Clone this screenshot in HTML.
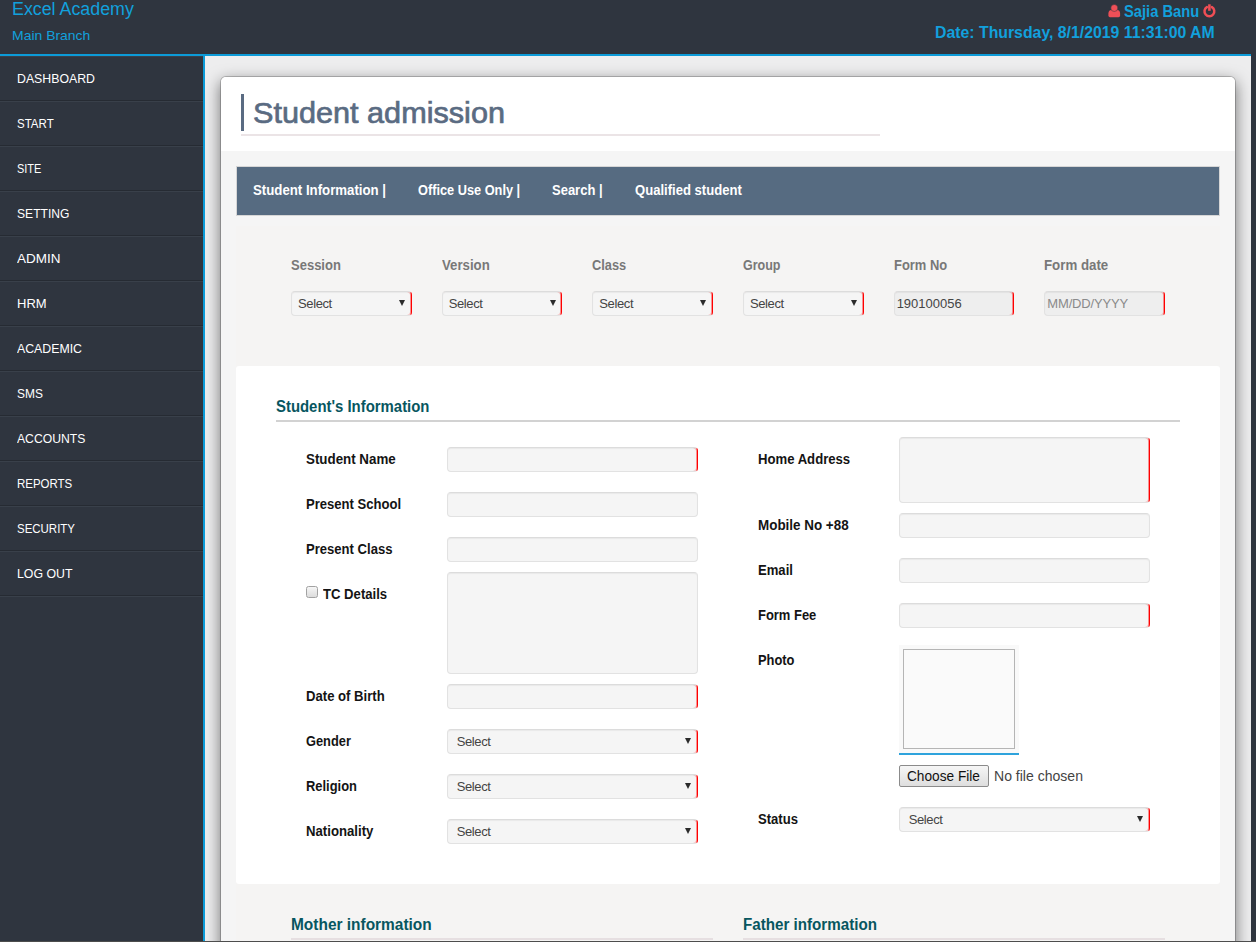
<!DOCTYPE html>
<html lang="en">
<head>
<meta charset="utf-8">
<title>Student admission</title>
<style>
*{box-sizing:border-box;margin:0;padding:0}
html,body{width:1256px;height:942px;overflow:hidden;background:#2f353f;font-family:"Liberation Sans",sans-serif;}
body{position:relative}
.abs{position:absolute}
a{color:inherit;text-decoration:none}
.fx{display:inline-block;transform-origin:0 50%;white-space:nowrap}
header{position:absolute;left:0;top:0;width:1251px;height:56px;background:#2f353f;border-bottom:2px solid #0c9bd8;z-index:5}
header .brand{position:absolute;left:11.5px;top:-3px;font-size:18px;line-height:24px;color:#12a0dc;white-space:nowrap}
header .branch{position:absolute;left:11.5px;top:26.4px;font-size:13.6px;line-height:20px;color:#12a0dc;white-space:nowrap}
header .user{position:absolute;left:1108px;top:0px;height:21px;font-size:16px;line-height:21px;font-weight:bold;color:#12a0dc;white-space:nowrap}
header .user span{position:absolute;left:16px;top:1px}
header .date{position:absolute;left:935px;top:22px;font-size:16px;line-height:21px;font-weight:bold;color:#12a0dc;white-space:nowrap}
nav.side{position:absolute;left:0;top:56px;width:203px;bottom:0;background:#2f353f}
nav.side ul{list-style:none;border-bottom:1px solid #39404a}
nav.side li{height:45px;border-bottom:1px solid #262b33;border-top:1px solid #39404a;padding-left:17px;font-size:13px;line-height:43px;color:#fff;text-transform:uppercase;white-space:nowrap}
main{position:absolute;left:203px;top:56px;width:1048px;height:886px;background:#ededee;border-left:2px solid #0c9bd8;overflow:hidden}
.card{position:absolute;left:15px;top:20px;width:1016px;height:900px;background:#f5f5f5;background-clip:padding-box;border:1px solid rgba(0,0,0,.2);border-radius:6px 6px 0 0;box-shadow:0 5px 15px rgba(0,0,0,.5);overflow:hidden}
.card-head{position:absolute;left:0;top:0;width:100%;height:74px;background:#fff}
.card-head h1{position:absolute;left:20px;top:17px;height:37px;border-left:3px solid #5a6b82;padding-left:9.4px;font-size:30px;line-height:37px;font-weight:normal;color:#5a6b82;white-space:nowrap;-webkit-text-stroke:.7px #5a6b82}
.card-head .rule{position:absolute;left:20px;top:57px;width:639px;height:2px;background:#ebe4e6}
.tabs{position:absolute;left:15px;top:89px;width:984px;height:50px;background:#566b81;border:1px solid #d6d6d6;list-style:none}
.tabs li{position:absolute;top:.6px;line-height:45px;font-size:14px;font-weight:bold;color:#fff;white-space:nowrap}
.filters{position:absolute;left:55px;top:167px;width:904px;display:flex}
.filters .col{flex:0 0 16.6667%;padding:0 15px;position:relative;height:90px}
.filters label{display:block;margin-top:12px;font-size:14px;line-height:18px;font-weight:bold;color:#787878;white-space:nowrap}
.filters .ctl{margin-top:17px;width:100%}
.ctl{position:relative;display:block;height:25px;background:#f5f5f5;border:1px solid #e2e2e2;border-top-color:#dcdcdc;border-radius:4px;box-shadow:inset 0 1px 1px rgba(0,0,0,.05);font-family:"Liberation Sans",sans-serif;font-size:13px;color:#444;padding:0 7px;line-height:23px;white-space:nowrap}
.panel .ctl,.panel .selw{position:absolute}
input.ctl,textarea.ctl,select.ctl,input.cb,button.fb{-webkit-appearance:none;appearance:none;outline:none;resize:none;margin:0}
textarea.ctl{overflow:hidden}
.selw{display:block;height:25px}
.selw select.ctl{position:static;display:block;width:100%;letter-spacing:-.38px}
.filters .selw{position:relative;margin-top:17px}
.filters .selw .ctl{margin-top:0}
input.ctl::placeholder{color:#8a8a8a;opacity:1}
.ctl.req{border-right:1px solid #f00;box-shadow:inset 0 1px 1px rgba(0,0,0,.05),inset -1px 0 0 rgba(255,0,0,.4)}
.ctl.ro{background:#eeeeee}
.selw .arr{position:absolute;right:6.5px;top:9px;width:0;height:0;border-left:3.5px solid transparent;border-right:3.5px solid transparent;border-top:6px solid #2b2b2b}
.panel{position:absolute;left:15px;top:289px;width:984px;height:518px;background:#fff;border-radius:3px}
.panel h2{position:absolute;left:40px;top:31px;font-size:16px;line-height:20px;font-weight:bold;color:#07565f;white-space:nowrap}
.panel .hr{position:absolute;left:40px;top:54px;width:904px;height:2px;background:#d2d2d2}
.panel .lab{position:absolute;font-size:14px;line-height:18px;font-weight:bold;color:#141414;white-space:nowrap}
.L{left:70px}.R{left:522px}
.LI{left:210.67px;width:251.33px}.RI{left:662.67px;width:251.33px}
.sec{position:absolute;top:838px;font-size:16px;line-height:20px;font-weight:bold;color:#07565f;white-space:nowrap}
.sechr{position:absolute;top:861px;height:2px;background:#e6dfe1}
</style>
</head>
<body>
<header>
  <div class="brand"><span id="brand" class="fx" style="transform:scaleX(0.9901)">Excel Academy</span></div>
  <div class="branch"><span id="branch" class="fx" style="transform:scaleX(1.0267)">Main Branch</span></div>
  <div class="user">
    <svg class="abs" style="left:0;top:4px" width="13" height="14" viewBox="0 0 13 14"><path d="M2 13.2 Q0.4 13.2 0.4 11.6 V9.6 Q0.4 6.3 3.4 6 H9.2 Q12.1 6.3 12.1 9.6 V11.6 Q12.1 13.2 10.5 13.2 Z" fill="#ee4f57"/><circle cx="6.3" cy="4" r="3.5" fill="#ee4f57" stroke="#2f353f" stroke-width=".5"/></svg>
    <span id="uname" class="fx" style="transform:scaleX(0.9189)">Sajia Banu</span>
    <svg class="abs" style="left:93.5px;top:4px" width="15" height="15" viewBox="0 0 15 15"><path d="M4.9 3.1 A4.9 4.9 0 1 0 9.9 3.1" fill="none" stroke="#f04e55" stroke-width="2.5" stroke-linecap="round"/><path d="M7.4 0.3 V6.8" stroke="#f04e55" stroke-width="2.6" stroke-linecap="butt"/></svg>
  </div>
  <div class="date"><span id="date" class="fx" style="transform:scaleX(0.9890)">Date: Thursday, 8/1/2019 11:31:00 AM</span></div>
</header>

<nav class="side"><ul><li><a href="#" id="s0" class="fx" style="transform:scaleX(0.9464)">DASHBOARD</a></li><li><a href="#" id="s1" class="fx" style="transform:scaleX(0.8859)">START</a></li><li><a href="#" id="s2" class="fx" style="transform:scaleX(0.8416)">SITE</a></li><li><a href="#" id="s3" class="fx" style="transform:scaleX(0.9305)">SETTING</a></li><li><a href="#" id="s4" class="fx" style="transform:scaleX(1.0367)">ADMIN</a></li><li><a href="#" id="s5" class="fx" style="transform:scaleX(1.0000)">HRM</a></li><li><a href="#" id="s6" class="fx" style="transform:scaleX(0.9471)">ACADEMIC</a></li><li><a href="#" id="s7" class="fx" style="transform:scaleX(0.9179)">SMS</a></li><li><a href="#" id="s8" class="fx" style="transform:scaleX(0.9357)">ACCOUNTS</a></li><li><a href="#" id="s9" class="fx" style="transform:scaleX(0.8826)">REPORTS</a></li><li><a href="#" id="s10" class="fx" style="transform:scaleX(0.8818)">SECURITY</a></li><li><a href="#" id="s11" class="fx" style="transform:scaleX(0.9492)">LOG OUT</a></li></ul></nav>

<main>
  <section class="card">
    <div class="card-head">
      <h1><span id="title" class="fx" style="transform:scaleX(1.0209)">Student admission</span></h1>
      <div class="rule"></div>
    </div>
    <ul class="tabs">
      <li style="left:16px"><a href="#" id="t0" class="fx" style="transform:scaleX(0.9450)">Student Information |</a></li>
      <li style="left:180.6px"><a href="#" id="t1" class="fx" style="transform:scaleX(0.9116)">Office Use Only |</a></li>
      <li style="left:315px"><a href="#" id="t2" class="fx" style="transform:scaleX(0.9280)">Search |</a></li>
      <li style="left:397.5px"><a href="#" id="t3" class="fx" style="transform:scaleX(0.9340)">Qualified student</a></li>
    </ul>
    <div class="abs" style="left:15px;top:149px;width:984px;height:760px;background:#f5f4f3"></div>
    <form>
    <div class="filters"><div class="col"><label><span id="f0" class="fx" style="transform:scaleX(0.9284)">Session</span></label><span class="selw"><select id="fs0" class="ctl req" style="padding-left:6px"><option>Select</option></select><i class="arr"></i></span></div><div class="col"><label><span id="f1" class="fx" style="transform:scaleX(0.9441)">Version</span></label><span class="selw"><select id="fs1" class="ctl req" style="padding-left:6px"><option>Select</option></select><i class="arr"></i></span></div><div class="col"><label><span id="f2" class="fx" style="transform:scaleX(0.9137)">Class</span></label><span class="selw"><select id="fs2" class="ctl req" style="padding-left:6px"><option>Select</option></select><i class="arr"></i></span></div><div class="col"><label><span id="f3" class="fx" style="transform:scaleX(0.8931)">Group</span></label><span class="selw"><select id="fs3" class="ctl req" style="padding-left:6px"><option>Select</option></select><i class="arr"></i></span></div><div class="col"><label><span id="f4" class="fx" style="transform:scaleX(0.9230)">Form No</span></label><input id="fv4" type="text" class="ctl req ro" style="padding-left:2px" value="190100056" readonly></div><div class="col"><label><span id="f5" class="fx" style="transform:scaleX(0.9493)">Form date</span></label><input id="fv5" type="text" class="ctl req ro" style="padding-left:2px;letter-spacing:-.15px" placeholder="MM/DD/YYYY" readonly></div></div>
    <div class="panel">
<h2><span id="h2" class="fx" style="transform:scaleX(0.9318)">Student&#39;s Information</span></h2><div class="hr"></div>
<label class="lab L" style="top:84px"><span id="l0" class="fx" style="transform:scaleX(0.9531)">Student Name</span></label>
<input type="text" class="ctl LI req" style="top:81px">
<label class="lab L" style="top:129px"><span id="l1" class="fx" style="transform:scaleX(0.9338)">Present School</span></label>
<input type="text" class="ctl LI" style="top:126px">
<label class="lab L" style="top:174px"><span id="l2" class="fx" style="transform:scaleX(0.9337)">Present Class</span></label>
<input type="text" class="ctl LI" style="top:171px">
<input type="checkbox" class="cb abs" style="left:70px;top:220px;width:12px;height:12px;border:1px solid #a2a2a2;border-radius:2.5px;background:linear-gradient(#f6f6f6,#dcdcdc)">
<label class="lab" style="left:87px;top:219px"><span id="l3" class="fx" style="transform:scaleX(0.9367)">TC Details</span></label>
<textarea class="ctl LI" style="top:206px;height:102px"></textarea>
<label class="lab L" style="top:321px"><span id="l4" class="fx" style="transform:scaleX(0.9369)">Date of Birth</span></label>
<input type="text" class="ctl LI req" style="top:318px">
<label class="lab L" style="top:366px"><span id="l5" class="fx" style="transform:scaleX(0.9165)">Gender</span></label>
<span class="selw LI" style="top:363px"><select id="bs0" class="ctl req" style="padding-left:9px"><option>Select</option></select><i class="arr"></i></span>
<label class="lab L" style="top:411px"><span id="l6" class="fx" style="transform:scaleX(0.9219)">Religion</span></label>
<span class="selw LI" style="top:408px"><select id="bs1" class="ctl req" style="padding-left:9px"><option>Select</option></select><i class="arr"></i></span>
<label class="lab L" style="top:456px"><span id="l7" class="fx" style="transform:scaleX(0.9418)">Nationality</span></label>
<span class="selw LI" style="top:453px"><select id="bs2" class="ctl req" style="padding-left:9px"><option>Select</option></select><i class="arr"></i></span>
<label class="lab R" style="top:84px"><span id="r0" class="fx" style="transform:scaleX(0.9377)">Home Address</span></label>
<textarea class="ctl RI req" style="top:71px;height:66px"></textarea>
<label class="lab R" style="top:150px"><span id="r1" class="fx" style="transform:scaleX(0.9589)">Mobile No +88</span></label>
<input type="text" class="ctl RI" style="top:147px">
<label class="lab R" style="top:195px"><span id="r2" class="fx" style="transform:scaleX(0.9352)">Email</span></label>
<input type="text" class="ctl RI" style="top:192px">
<label class="lab R" style="top:240px"><span id="r3" class="fx" style="transform:scaleX(0.9254)">Form Fee</span></label>
<input type="text" class="ctl RI req" style="top:237px">
<label class="lab R" style="top:285px"><span id="r4" class="fx" style="transform:scaleX(0.9202)">Photo</span></label>
<div class="abs" style="left:663px;top:279px;width:120px;height:110px;background:#f9f9f9;border-bottom:2px solid #2ea3dc"></div>
<div class="abs" style="left:667px;top:283px;width:112px;height:100px;border:1px solid #b5b5b5;background:#fafafa"></div>
<button type="button" class="fb abs" style="left:663px;top:399px;width:90px;height:22px;border:1px solid #8b8b8b;border-radius:2px;background:linear-gradient(#f6f6f6,#dedede);font-family:inherit;font-size:14.4px;line-height:20px;color:#111;text-align:left;padding:0 0 0 7px;white-space:nowrap"><span id="cf" class="fx" style="transform:scaleX(0.9502)">Choose File</span></button>
<span class="abs" style="left:758px;top:401px;font-size:14.4px;line-height:18px;color:#444;white-space:nowrap"><span id="nf" class="fx" style="transform:scaleX(0.9755)">No file chosen</span></span>
<label class="lab R" style="top:444px"><span id="r5" class="fx" style="transform:scaleX(0.9329)">Status</span></label>
<span class="selw RI" style="top:441px"><select id="bs3" class="ctl req" style="padding-left:9px"><option>Select</option></select><i class="arr"></i></span>
    </div>
    </form>
    <h3 class="sec" style="left:70px"><span id="m" class="fx" style="transform:scaleX(0.9653)">Mother information</span></h3>
    <div class="sechr" style="left:70px;width:422px"></div>
    <h3 class="sec" style="left:522px"><span id="f" class="fx" style="transform:scaleX(0.9479)">Father information</span></h3>
    <div class="sechr" style="left:522px;width:422px"></div>
  </section>
</main>
<div class="abs" style="left:0;top:941px;width:1256px;height:1px;background:#4d4d4d;z-index:9"></div>
</body>
</html>
